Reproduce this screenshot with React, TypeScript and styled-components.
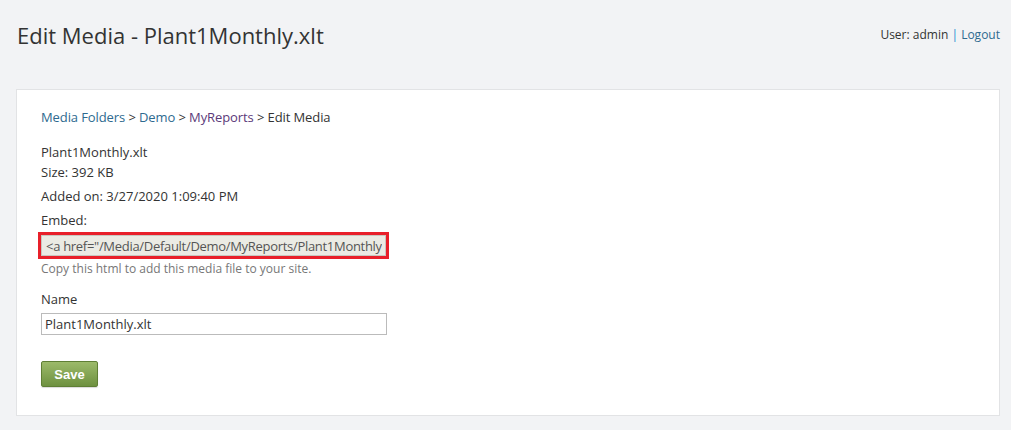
import React from "react";
import styled, { createGlobalStyle } from "styled-components";

const GlobalStyle = createGlobalStyle`
  html, body {
    margin: 0;
    padding: 0;
    background: #f2f3f5;
  }
  body {
    font-family: "Open Sans", "Noto Sans", sans-serif;
    color: #333;
  }
`;

const App = () => {
  return (
    <>
      <GlobalStyle />
      <Page>
        <Header>
          <Title>Edit Media - Plant1Monthly.xlt</Title>
          <UserBar>
            User: admin <Pipe>|</Pipe> <Link href="#">Logout</Link>
          </UserBar>
        </Header>

        <Card>
          <Breadcrumb>
            <Link href="#">Media Folders</Link> &gt; <Link href="#">Demo</Link> &gt;{" "}
            <Visited href="#">MyReports</Visited> &gt; Edit Media
          </Breadcrumb>

          <InfoLine>Plant1Monthly.xlt</InfoLine>
          <InfoLine>Size: 392 KB</InfoLine>
          <InfoLine $gap>Added on: 3/27/2020 1:09:40 PM</InfoLine>
          <InfoLine $gap>Embed:</InfoLine>

          <Highlight>
            <EmbedInput
              readOnly
              value={'<a href="/Media/Default/Demo/MyReports/Plant1Monthly.xlt">Plant1Monthly.xlt</a>'}
            />
          </Highlight>
          <Hint>Copy this html to add this media file to your site.</Hint>

          <FieldLabel htmlFor="name">Name</FieldLabel>
          <NameInput id="name" defaultValue="Plant1Monthly.xlt" />

          <SaveButton>Save</SaveButton>
        </Card>
      </Page>
    </>
  );
};

const Page = styled.div`
  padding: 0 11px 15px 16px;
`;

const Header = styled.header`
  display: flex;
  justify-content: space-between;
  align-items: flex-start;
  height: 89px;
`;

const Title = styled.h1`
  margin: 20px 0 0 1px;
  font-size: 22px;
  font-weight: 400;
  color: #333;
`;

const UserBar = styled.div`
  margin-top: 26px;
  font-size: 12px;
  color: #333;
`;

const Pipe = styled.span`
  color: #2a8bd0;
`;

const Link = styled.a`
  color: #2e6a8f;
  text-decoration: none;
`;

const Visited = styled.a`
  color: #5b3a7a;
  text-decoration: none;
`;

const Card = styled.section`
  background: #fff;
  border: 1px solid #e2e3e5;
  padding: 18px 24px 28px 24px;
  display: flex;
  flex-direction: column;
  align-items: flex-start;
`;

const Breadcrumb = styled.div`
  font-size: 13px;
  line-height: 18px;
  margin-bottom: 15px;
  letter-spacing: -0.1px;
`;

const InfoLine = styled.div<{ $gap?: boolean }>`
  font-size: 13px;
  line-height: 18px;
  margin-top: ${(p) => (p.$gap ? "6px" : "2px")};
  &:first-of-type {
    margin-top: 0;
  }
`;

const Highlight = styled.div`
  margin: 3px 0 0 -3px;
  border: 3px solid #e8202a;
  padding: 0;
  width: 345px;
`;

const EmbedInput = styled.input`
  display: block;
  box-sizing: border-box;
  width: 100%;
  height: 21px;
  border: 1px solid #c8c8c0;
  background: #ebebe4;
  color: #555;
  font-family: "Open Sans", "Noto Sans", sans-serif;
  font-size: 13px;
  letter-spacing: -0.3px;
  padding: 0 3px 0 4px;
  outline: none;
`;

const Hint = styled.div`
  font-size: 12px;
  color: #777;
  margin-top: 1px;
`;

const FieldLabel = styled.label`
  font-size: 13px;
  margin-top: 13px;
`;

const NameInput = styled.input`
  box-sizing: border-box;
  width: 346px;
  height: 22px;
  margin-top: 5px;
  border: 1px solid #bbb;
  font-family: "Open Sans", "Noto Sans", sans-serif;
  font-size: 13px;
  color: #333;
  padding: 0 3px;
  outline: none;
`;

const SaveButton = styled.button`
  margin-top: 26px;
  width: 57px;
  height: 26px;
  border: 1px solid #5f7f35;
  border-radius: 2px;
  background: linear-gradient(#9cba6a, #6e9140);
  color: #fff;
  font-family: "Liberation Sans", Arial, sans-serif;
  font-weight: 700;
  font-size: 13px;
  box-shadow: 0 1px 1px rgba(0, 0, 0, 0.15);
  cursor: pointer;
`;

export default App;
